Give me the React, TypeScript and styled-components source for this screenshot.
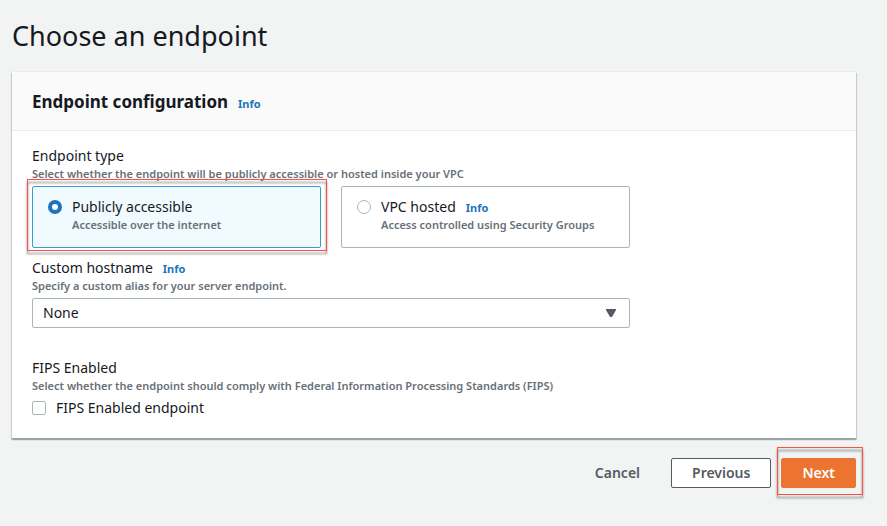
import React, { useState } from "react";
import styled, { createGlobalStyle, css } from "styled-components";

const GlobalStyle = createGlobalStyle`
  *, *::before, *::after { box-sizing: border-box; }
  body {
    margin: 0;
    background: #f2f3f3;
    color: #16191f;
    font-family: "Noto Sans", "Open Sans", sans-serif;
    font-size: 14px;
    line-height: 18px;
  }
  button, input, select { font: inherit; color: inherit; margin: 0; }
`;

const Page = styled.main`
  padding: 16px 31px 30px 12px;
`;

const Title = styled.h1`
  margin: 0 0 16px;
  font-size: 27px;
  font-weight: 400;
  line-height: 40px;
`;

const Panel = styled.section`
  background: #fff;
  box-shadow: 0 1px 1px 0 rgba(0, 28, 36, 0.1), 1px 1px 1px 0 rgba(0, 28, 36, 0.15),
    -1px 1px 1px 0 rgba(0, 28, 36, 0.15), 0 -1px 0 0 #eaeded;
  border-bottom: 1px solid #95a1a3;
`;

const PanelHeader = styled.header`
  display: flex;
  align-items: baseline;
  gap: 10px;
  padding: 19px 20px 17px;
  background: #fafafa;
  border-bottom: 1px solid #eaeded;
`;

const PanelTitle = styled.h2`
  margin: 0;
  font-size: 17px;
  font-weight: 700;
  line-height: 22px;
`;

const PanelBody = styled.div`
  display: flex;
  flex-direction: column;
  max-width: 638px;
  padding: 16px 20px 21px;
`;

const Field = styled.div<{ $space?: number }>`
  margin: 0 0 ${(p) => p.$space ?? 0}px;
`;

const LabelRow = styled.div`
  display: flex;
  align-items: baseline;
  gap: 10px;
`;

const FieldLabel = styled.label``;

const Hint = styled.div`
  color: #687078;
  font-size: 11px;
  font-weight: 600;
`;

const InfoLink = styled.a`
  color: #1b74bd;
  font-size: 11px;
  font-weight: 700;
  line-height: 14px;
  text-decoration: none;
`;

const Tiles = styled.div`
  display: grid;
  grid-template-columns: 1fr 1fr;
  gap: 20px;
  margin-top: 3px;
`;

const Highlight = styled.div<{ $inset: string }>`
  position: relative;
  display: grid;

  &::after {
    content: "";
    position: absolute;
    inset: ${(p) => p.$inset};
    border: 1px solid #fa5343;
    filter: drop-shadow(0 3px 1px rgba(0, 0, 0, 0.55));
    pointer-events: none;
  }
`;

const Tile = styled.div<{ $selected: boolean }>`
  display: grid;
  grid-template-columns: 14px 1fr;
  column-gap: 10px;
  padding: 11px 15px 13px;
  border: 1px solid ${(p) => (p.$selected ? "#3a9fc4" : "#aab7b8")};
  border-radius: 2px;
  background: ${(p) => (p.$selected ? "#f1faff" : "#fff")};
`;

const control = css`
  appearance: none;
  width: 14px;
  height: 14px;
  margin: 2px 0;
  border: 1px solid #aab7b8;
  background: #fff;
`;

const Radio = styled.input`
  ${control}
  border-radius: 50%;

  &:checked {
    border: 4px solid #1b74bd;
  }
`;

const Checkbox = styled.input`
  ${control}
  border-radius: 2px;

  &:checked {
    border-color: #0073bb;
    background: #0073bb;
  }
`;

const CheckRow = styled.div`
  display: flex;
  gap: 10px;
  margin-top: 4px;
`;

const SelectWrap = styled.div`
  position: relative;
  display: grid;
  margin-top: 3px;
`;

const Select = styled.select`
  appearance: none;
  height: 30px;
  padding: 0 34px 0 10px;
  border: 1px solid #aab7b8;
  border-radius: 2px;
  background: #fff;
`;

const Caret = styled.svg`
  position: absolute;
  top: 11px;
  right: 14px;
  pointer-events: none;
`;

const Actions = styled.footer`
  display: flex;
  justify-content: flex-end;
  align-items: center;
  gap: 10px;
  margin-top: 19px;
`;

const Button = styled.button<{ $kind: "link" | "normal" | "primary" }>`
  height: 30px;
  padding: 0 20px;
  border: 1px solid transparent;
  border-radius: 2px;
  background: transparent;
  color: #545b64;
  font-weight: 600;
  cursor: pointer;

  ${(p) =>
    p.$kind === "normal" &&
    css`
      border-color: #545b64;
      background: #fff;
    `}
  ${(p) =>
    p.$kind === "primary" &&
    css`
      border-color: #ec7430;
      background: #ec7430;
      color: #fff;
    `}
`;

function Info() {
  return <InfoLink href="#info">Info</InfoLink>;
}

export default function App() {
  const [type, setType] = useState("public");
  const [fips, setFips] = useState(false);

  return (
    <>
      <GlobalStyle />
      <Page>
        <Title>Choose an endpoint</Title>
        <Panel>
          <PanelHeader>
            <PanelTitle>Endpoint configuration</PanelTitle>
            <Info />
          </PanelHeader>
          <PanelBody>
            <Field $space={11} role="radiogroup" aria-labelledby="type-label">
              <div id="type-label">Endpoint type</div>
              <Hint>Select whether the endpoint will be publicly accessible or hosted inside your VPC</Hint>
              <Tiles>
                <Highlight $inset="-7px -6px -3px -5px">
                  <Tile $selected={type === "public"}>
                    <Radio
                      type="radio"
                      name="type"
                      id="public"
                      checked={type === "public"}
                      onChange={() => setType("public")}
                    />
                    <div>
                      <FieldLabel htmlFor="public">Publicly accessible</FieldLabel>
                      <Hint>Accessible over the internet</Hint>
                    </div>
                  </Tile>
                </Highlight>
                <Tile $selected={type === "vpc"}>
                  <Radio
                    type="radio"
                    name="type"
                    id="vpc"
                    checked={type === "vpc"}
                    onChange={() => setType("vpc")}
                  />
                  <div>
                    <LabelRow>
                      <FieldLabel htmlFor="vpc">VPC hosted</FieldLabel>
                      <Info />
                    </LabelRow>
                    <Hint>Access controlled using Security Groups</Hint>
                  </div>
                </Tile>
              </Tiles>
            </Field>

            <Field $space={31}>
              <LabelRow>
                <FieldLabel htmlFor="hostname">Custom hostname</FieldLabel>
                <Info />
              </LabelRow>
              <Hint>Specify a custom alias for your server endpoint.</Hint>
              <SelectWrap>
                <Select id="hostname" defaultValue="none">
                  <option value="none">None</option>
                </Select>
                <Caret width="10" height="8" viewBox="0 0 10 8" aria-hidden="true">
                  <path d="M0 0h10v1L6 8H4L0 1z" fill="#545b64" />
                </Caret>
              </SelectWrap>
            </Field>

            <Field role="group" aria-labelledby="fips-label">
              <div id="fips-label">FIPS Enabled</div>
              <Hint>Select whether the endpoint should comply with Federal Information Processing Standards (FIPS)</Hint>
              <CheckRow>
                <Checkbox
                  type="checkbox"
                  id="fips"
                  checked={fips}
                  onChange={(e) => setFips(e.target.checked)}
                />
                <FieldLabel htmlFor="fips">FIPS Enabled endpoint</FieldLabel>
              </CheckRow>
            </Field>
          </PanelBody>
        </Panel>

        <Actions>
          <Button type="button" $kind="link">Cancel</Button>
          <Button type="button" $kind="normal">Previous</Button>
          <Highlight $inset="-11px -7px -7px -4px">
            <Button type="button" $kind="primary">Next</Button>
          </Highlight>
        </Actions>
      </Page>
    </>
  );
}
